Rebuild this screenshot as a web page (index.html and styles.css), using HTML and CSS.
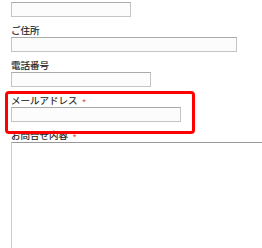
FILE: index.html
```html
<!DOCTYPE html>
<html>
<head>
<meta charset="utf-8">
<title>お問合せ</title>
<link rel="stylesheet" href="styles.css">
</head>
<body>
<div class="form">
	<div class="field first">
		<input type="text" class="txt w120">
	</div>
	<div class="field">
		<label class="lbl">ご住所</label>
		<input type="text" class="txt w226">
	</div>
	<div class="field">
		<label class="lbl">電話番号</label>
		<input type="text" class="txt w140">
	</div>
	<div class="field">
		<label class="lbl">メールアドレス <span class="req">*</span></label>
		<input type="text" class="txt w170">
	</div>
	<div class="field">
		<label class="lbl">お問合せ内容 <span class="req">*</span></label>
		<textarea class="area"></textarea>
	</div>
	<div class="highlight"></div>
</div>
</body>
</html>
```

FILE: styles.css
```css
html, body {
	margin: 0;
	padding: 0;
	background: #fff;
	overflow: hidden;
}
.form {
	position: relative;
	padding: 2px 0 0 11px;
	font-family: "Noto Sans CJK JP", "Noto Sans", sans-serif;
}
.field {
	margin-top: 7px;
}
.field.first {
	margin-top: 0;
}
.lbl {
	display: block;
	height: 12px;
	font-size: 9.5px;
	line-height: 12px;
	color: #222;
	margin-bottom: 1px;
	-webkit-text-stroke: 0.15px #222;
}
.req {
	color: #e05a5a;
	font-size: 10px;
	line-height: 0;
	vertical-align: -3px;
	margin-left: 2px;
	-webkit-text-stroke: 0;
}
.txt {
	display: block;
	box-sizing: border-box;
	height: 15px;
	padding: 0;
	margin: 0;
	border: 1px solid #c4c4c4;
	border-top-color: #aaa;
	background: #fcfcfc;
}
.w120 { width: 120px; }
.w226 { width: 226px; }
.w140 { width: 140px; }
.w170 { width: 170px; }
.area {
	display: block;
	box-sizing: border-box;
	width: 300px;
	height: 160px;
	margin: 0;
	padding: 0;
	border: 1px solid #ccc;
	border-top-color: #999;
	resize: none;
}
/* red frame drawn over the mail field */
.highlight {
	position: absolute;
	left: 5px;
	top: 91px;
	width: 190px;
	height: 43px;
	box-sizing: border-box;
	border: 3px solid #f00;
	border-radius: 4px;
}
```
